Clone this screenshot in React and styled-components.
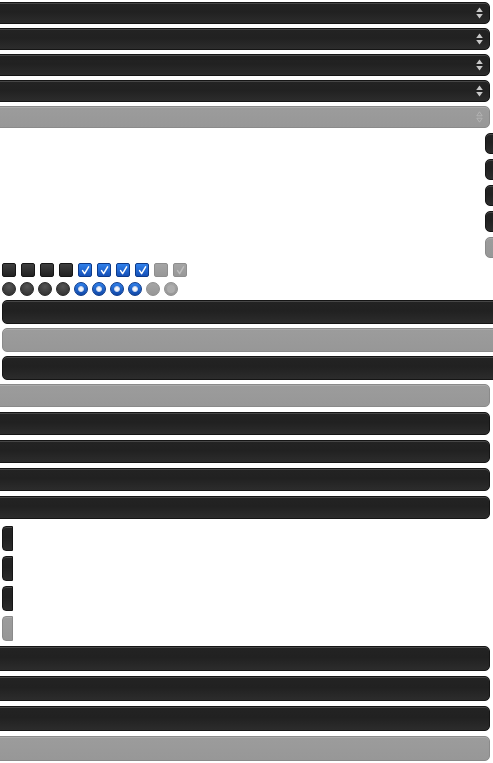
import styled, { createGlobalStyle, css } from "styled-components";

const GlobalStyle = createGlobalStyle`
  html, body {
    margin: 0;
    padding: 0;
    background: #ffffff;
    font-family: "Liberation Sans", Arial, sans-serif;
  }
  body {
    overflow: hidden;
  }
`;

const Page = styled.div`
  width: 493px;
  height: 763px;
  overflow: hidden;
  display: flex;
  flex-direction: column;
`;

const Group = styled.div`
  display: flex;
  flex-direction: column;
  gap: ${(p) => p.$gap}px;
  margin-top: ${(p) => p.$top}px;
  align-items: ${(p) => p.$align || "stretch"};
`;

const darkSkin = css`
  background: linear-gradient(#232323 0%, #212121 45%, #2c2c2c 100%);
  border: 1px solid #151515;
  box-shadow: inset 0 1px 0 rgba(255, 255, 255, 0.16);
`;

const graySkin = css`
  background: linear-gradient(#9c9c9c, #979797);
  border: 1px solid #8a8a8a;
  box-shadow: inset 0 1px 0 rgba(255, 255, 255, 0.15);
`;

const Bar = styled.div`
  box-sizing: border-box;
  height: ${(p) => p.$h}px;
  ${(p) => (p.$off ? graySkin : darkSkin)}
`;

/* bars that start off the left edge and end at x=490 */
const LeftCutBar = styled(Bar)`
  margin-left: -20px;
  margin-right: 3px;
  border-radius: 0 5px 5px 0;
  position: relative;
`;

/* bars that start at x=2 and run past the right edge */
const RightCutBar = styled(Bar)`
  margin-left: 2px;
  margin-right: -20px;
  border-radius: 5px 0 0 5px;
`;

const StubRight = styled(Bar)`
  width: 16px;
  margin-left: 485px;
  border-radius: 5px 0 0 5px;
`;

const StubLeft = styled(Bar)`
  width: 11px;
  margin-left: 2px;
  border-radius: 4px 0 0 4px;
`;

const Arrows = styled.svg`
  position: absolute;
  right: 6px;
  top: 50%;
  transform: translateY(-50%);
`;

const Row = styled.div`
  display: flex;
  gap: ${(p) => p.$gap}px;
  margin-top: ${(p) => p.$top}px;
  padding-left: 2px;
`;

const Check = styled.div`
  box-sizing: border-box;
  width: 14px;
  height: 14px;
  border-radius: 2px;
  display: flex;
  align-items: center;
  justify-content: center;
  ${(p) =>
    p.$off
      ? css`
          background: linear-gradient(#a5a5a5, #989898);
          border: 1px solid #8e8e8e;
        `
      : p.$on
      ? css`
          background: linear-gradient(#3080ea, #1550b8);
          border: 1px solid #0d3a8a;
        `
      : css`
          background: linear-gradient(#404040, #222222);
          border: 1px solid #161616;
        `}
`;

const Radio = styled.div`
  box-sizing: border-box;
  width: 14px;
  height: 14px;
  border-radius: 50%;
  display: flex;
  align-items: center;
  justify-content: center;
  ${(p) =>
    p.$off
      ? css`
          background: linear-gradient(#a5a5a5, #979797);
          border: 1px solid #8e8e8e;
        `
      : p.$on
      ? css`
          background: linear-gradient(#3080ea, #1148a8);
          border: 1px solid #0d3a8a;
        `
      : css`
          background: radial-gradient(circle at 50% 30%, #555555, #363636 75%);
          border: 1px solid #262626;
        `}
`;

const Dot = styled.span`
  box-sizing: border-box;
  border-radius: 50%;
  width: ${(p) => (p.$off ? 8 : 6)}px;
  height: ${(p) => (p.$off ? 8 : 6)}px;
  background: ${(p) => (p.$off ? "#adadad" : "#f4f6fb")};
  border: ${(p) => (p.$off ? "none" : "1px solid #c9d4ea")};
`;

function UpDown({ off }) {
  const c = off ? "#b9b9b9" : "#c8c8c8";
  return (
    <Arrows width="7" height="12" viewBox="0 0 7 12">
      {off ? (
        <>
          <path d="M3.5 0.8 L6.2 4.8 H0.8 Z" fill="none" stroke={c} strokeWidth="0.8" />
          <path d="M3.5 11.2 L6.2 7.2 H0.8 Z" fill="none" stroke={c} strokeWidth="0.8" />
        </>
      ) : (
        <>
          <path d="M3.5 0.5 L6.8 5 H0.2 Z" fill={c} />
          <path d="M3.5 11.5 L6.8 7 H0.2 Z" fill={c} />
        </>
      )}
    </Arrows>
  );
}

function Tick({ off }) {
  return (
    <svg width="9" height="9" viewBox="0 0 9 9">
      <path
        d="M1.6 4.6 L3.6 7.6 L7.6 0.8"
        fill="none"
        stroke={off ? "#bdbdbd" : "#ffffff"}
        strokeWidth="1.5"
        strokeLinecap="round"
        strokeLinejoin="round"
      />
    </svg>
  );
}

const states = ["n", "n", "n", "n", "on", "on", "on", "on", "off", "offOn"];

export default function App() {
  return (
    <>
      <GlobalStyle />
      <Page>
        {/* selects */}
        <Group $gap={4} $top={2}>
          {[0, 1, 2, 3, 4].map((i) => (
            <LeftCutBar key={i} $h={22} $off={i === 4}>
              <UpDown off={i === 4} />
            </LeftCutBar>
          ))}
        </Group>

        {/* buttons hanging past the right edge */}
        <Group $gap={5} $top={5}>
          {[0, 1, 2, 3, 4].map((i) => (
            <StubRight key={i} $h={21} $off={i === 4} />
          ))}
        </Group>

        {/* checkboxes */}
        <Row $gap={5} $top={5}>
          {states.map((s, i) => (
            <Check key={i} $on={s === "on"} $off={s === "off" || s === "offOn"}>
              {s === "on" && <Tick />}
              {s === "offOn" && <Tick off />}
            </Check>
          ))}
        </Row>

        {/* radios */}
        <Row $gap={4} $top={5}>
          {states.map((s, i) => (
            <Radio key={i} $on={s === "on"} $off={s === "off" || s === "offOn"}>
              {s === "on" && <Dot />}
              {s === "offOn" && <Dot $off />}
            </Radio>
          ))}
        </Row>

        {/* wide buttons */}
        <Group $gap={4} $top={4}>
          {[0, 1, 2].map((i) => (
            <RightCutBar key={i} $h={24} $off={i === 1} />
          ))}
        </Group>

        {/* text fields */}
        <Group $gap={5} $top={4}>
          {[0, 1, 2, 3, 4].map((i) => (
            <LeftCutBar key={i} $h={23} $off={i === 0} />
          ))}
        </Group>

        {/* narrow items on the left */}
        <Group $gap={5} $top={7} $align="flex-start">
          {[0, 1, 2, 3].map((i) => (
            <StubLeft key={i} $h={25} $off={i === 3} />
          ))}
        </Group>

        {/* bottom fields */}
        <Group $gap={5} $top={5}>
          {[0, 1, 2, 3].map((i) => (
            <LeftCutBar key={i} $h={25} $off={i === 3} />
          ))}
        </Group>
      </Page>
    </>
  );
}
